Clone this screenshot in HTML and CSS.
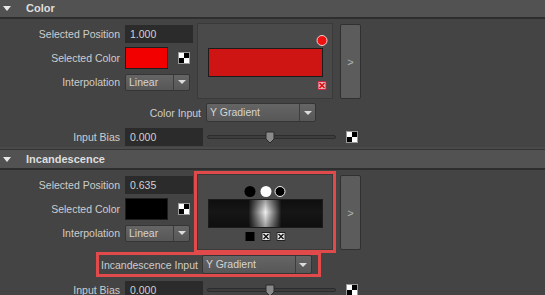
FILE: index.html
```html
<!DOCTYPE html>
<html lang="en">
<head>
    <meta charset="UTF-8">
    <title>Ramp Attributes</title>
    <link rel="stylesheet" href="styles.css">
</head>
<body>
<div class="editor">

    <!-- Color frame -->
    <section class="frame">
        <div class="frame-head"><span class="tri"></span>Color</div>
        <div class="frame-body">
            <div class="ramp-row">
                <div class="fields">
                    <div class="row">
                        <label>Selected Position</label>
                        <div class="num">1.000</div>
                    </div>
                    <div class="row">
                        <label>Selected Color</label>
                        <div class="swatch red"></div>
                        <span class="checker"></span>
                    </div>
                    <div class="row">
                        <label>Interpolation</label>
                        <div class="select small"><span class="value">Linear</span><span class="arrow"></span></div>
                    </div>
                </div>
                <div class="ramp">
                    <div class="marks">
                        <span class="stop" style="left: 100%"><span class="dot dot-red"></span></span>
                    </div>
                    <div class="bar bar-red"></div>
                    <div class="marks low">
                        <span class="stop" style="left: 100%">
                            <svg class="xbox" width="9" height="9" viewBox="0 0 9 9"><rect x="0.5" y="0.5" width="8" height="8" fill="#e9b5b5" stroke="#c24" /><path d="M2 2L7 7M7 2L2 7" stroke="#e01010" stroke-width="1.6" /></svg>
                        </span>
                    </div>
                </div>
                <button class="expand">&gt;</button>
            </div>
            <div class="row wide">
                <label>Color Input</label>
                <div class="select input"><span class="value">Y Gradient</span><span class="arrow"></span></div>
            </div>
            <div class="row bias-row">
                <label>Input Bias</label>
                <div class="num bias">0.000</div>
                <div class="slider">
                    <svg class="thumb" style="left: 49%" width="10" height="13" viewBox="0 0 10 13"><path d="M1 1H9V8L5 12L1 8Z" fill="#8a8a8a" stroke="#2a2a2a" /></svg>
                </div>
                <span class="checker"></span>
            </div>
        </div>
    </section>

    <!-- Incandescence frame -->
    <section class="frame">
        <div class="frame-head"><span class="tri"></span>Incandescence</div>
        <div class="frame-body">
            <div class="ramp-row">
                <div class="fields">
                    <div class="row">
                        <label>Selected Position</label>
                        <div class="num">0.635</div>
                    </div>
                    <div class="row">
                        <label>Selected Color</label>
                        <div class="swatch black"></div>
                        <span class="checker"></span>
                    </div>
                    <div class="row">
                        <label>Interpolation</label>
                        <div class="select small"><span class="value">Linear</span><span class="arrow"></span></div>
                    </div>
                </div>
                <div class="ramp highlight">
                    <div class="marks">
                        <span class="stop" style="left: 36%"><span class="dot dot-black"></span></span>
                        <span class="stop" style="left: 50%"><span class="dot dot-white"></span></span>
                        <span class="stop" style="left: 63%"><span class="dot dot-sel"></span></span>
                    </div>
                    <div class="bar bar-grad"></div>
                    <div class="marks low">
                        <span class="stop" style="left: 36%"><span class="sq"></span></span>
                        <span class="stop" style="left: 50%">
                            <svg class="xbox" width="9" height="9" viewBox="0 0 9 9"><rect x="0.5" y="0.5" width="8" height="8" fill="#e6e6e6" stroke="#222" /><path d="M2 2L7 7M7 2L2 7" stroke="#111" stroke-width="1.4" /></svg>
                        </span>
                        <span class="stop" style="left: 64%">
                            <svg class="xbox" width="9" height="9" viewBox="0 0 9 9"><rect x="0.5" y="0.5" width="8" height="8" fill="#e6e6e6" stroke="#222" /><path d="M2 2L7 7M7 2L2 7" stroke="#111" stroke-width="1.4" /></svg>
                        </span>
                    </div>
                </div>
                <button class="expand">&gt;</button>
            </div>
            <div class="row marked">
                <label>Incandescence Input</label>
                <div class="select input"><span class="value">Y Gradient</span><span class="arrow"></span></div>
            </div>
            <div class="row bias-row">
                <label>Input Bias</label>
                <div class="num bias">0.000</div>
                <div class="slider">
                    <svg class="thumb" style="left: 49%" width="10" height="13" viewBox="0 0 10 13"><path d="M1 1H9V8L5 12L1 8Z" fill="#8a8a8a" stroke="#2a2a2a" /></svg>
                </div>
                <span class="checker"></span>
            </div>
        </div>
    </section>

</div>
</body>
</html>
```

FILE: styles.css
```css
body {
    margin: 0;
    background: #444;
    font-family: "Liberation Sans", Arial, sans-serif;
    font-size: 10.5px;
    color: #cdcdcd;
    overflow: hidden;
}

.editor {
    margin-top: -1px;
}

/* Frame header */
.frame-head {
    height: 18px;
    display: flex;
    align-items: center;
    background: #525252;
    border-bottom: 2px solid #2e2e2e;
    font-size: 11px;
    font-weight: bold;
    color: #dedede;
}

.tri {
    width: 0;
    height: 0;
    margin: 0 15px 0 3px;
    border-left: 4px solid transparent;
    border-right: 4px solid transparent;
    border-top: 5px solid #e8e8e8;
}

.frame-body {
    padding: 4px 0 3px;
    border-bottom: 1px solid #353535;
    box-shadow: inset 0 -2px 0 #4a4a4a;
}

/* Rows */
.row {
    display: flex;
    align-items: center;
    height: 18px;
}

.row label {
    width: 120px;
    text-align: right;
    margin-right: 5px;
    white-space: nowrap;
}

.fields {
    width: 194px;
    padding-top: 2px;
    display: flex;
    flex-direction: column;
    gap: 4px;
}

.fields .row:nth-child(2) {
    height: 22px;
}

.num {
    width: 63px;
    height: 18px;
    line-height: 18px;
    padding-left: 5px;
    background: #2b2b2b;
    color: #d2d2d2;
}

.num.bias {
    width: 73px;
}

.swatch {
    width: 41px;
    height: 20px;
    border: 1px solid #1e1e1e;
}

.swatch.red {
    background: #f20000;
}

.swatch.black {
    background: #000;
}

.checker {
    width: 10px;
    height: 10px;
    margin-left: 10px;
    border: 1px solid #9a9a9a;
    background: conic-gradient(#000 0 25%, #fff 0 50%, #000 0 75%, #fff 0);
}

/* Dropdowns */
.select {
    display: flex;
    height: 17px;
    border: 1px solid #353535;
    border-radius: 2px;
    background: linear-gradient(#656565, #575757);
    box-sizing: border-box;
}

.select .value {
    flex: 1;
    padding-left: 3px;
    line-height: 15px;
    color: #d4d4d4;
}

.select .arrow {
    width: 15px;
    border-left: 1px solid #3d3d3d;
    display: flex;
    align-items: center;
    justify-content: center;
}

.select .arrow::after {
    content: "";
    border-left: 4px solid transparent;
    border-right: 4px solid transparent;
    border-top: 4px solid #dcdcdc;
}

.select.small {
    width: 65px;
}

.select.input {
    width: 110px;
    height: 19px;
}

.select.input .value {
    line-height: 17px;
}

/* Ramp editor */
.ramp-row {
    display: flex;
    align-items: flex-start;
}

.ramp {
    width: 136px;
    height: 76px;
    margin-left: 3px;
    padding: 11px 9px 0 10px;
    box-sizing: border-box;
    background: #4a4a4a;
    border: 1px solid #3a3a3a;
    display: flex;
    flex-direction: column;
}

.ramp.highlight {
    outline: 3px solid #e14a4b;
    outline-offset: 0;
}

.marks {
    position: relative;
    height: 11px;
    margin: 0 1px;
}

.marks.low {
    height: 9px;
    margin-top: 4px;
}

.stop {
    position: absolute;
    top: 0;
    transform: translateX(-50%);
    display: flex;
}

.dot {
    width: 11px;
    height: 11px;
    border-radius: 50%;
    box-sizing: border-box;
}

.dot-red {
    background: #f01010;
    border: 1px solid #f5d0d0;
}

.dot-black {
    background: #000;
}

.dot-white {
    background: #fff;
}

.dot-sel {
    background: #000;
    border: 1.5px solid #f0f0f0;
}

.sq {
    width: 9px;
    height: 9px;
    background: #000;
}

.bar {
    height: 29px;
    margin-top: 2px;
    box-sizing: border-box;
    border: 1px solid #1c1c1c;
}

.bar-red {
    background: #cf1414;
}

.bar-grad {
    background:
        linear-gradient(rgba(0, 0, 0, 0.35), rgba(0, 0, 0, 0) 45%, rgba(0, 0, 0, 0.35)),
        linear-gradient(to right, #161616 35%, #f0f0f0 50%, #161616 64%);
}

.expand {
    width: 21px;
    height: 75px;
    margin: 1px 0 0 7px;
    padding: 0;
    background: #5c5c5c;
    border: 1px solid #303030;
    border-radius: 2px;
    color: #b4b4b4;
    font-family: "Liberation Sans", Arial, sans-serif;
    font-size: 11px;
}

.row.wide {
    margin-top: 4px;
    height: 19px;
}

.row.wide label {
    width: 201px;
}

.bias-row {
    margin-top: 6px;
}

/* Slider */
.slider {
    position: relative;
    width: 129px;
    height: 4px;
    margin-left: 4px;
    border: 1px solid #2c2c2c;
    border-radius: 3px;
    background: #3d3d3d;
    box-sizing: border-box;
}

.thumb {
    position: absolute;
    top: -5px;
    transform: translateX(-50%);
}

/* Highlighted input row */
.row.marked {
    width: 215px;
    height: 19px;
    margin: 5px 0 0 99px;
    padding: 0 2px;
    outline: 3px solid #e14a4b;
}

.row.marked label {
    width: auto;
    margin-right: 4px;
}

.row.marked + .bias-row {
    margin-top: 7px;
}
```
